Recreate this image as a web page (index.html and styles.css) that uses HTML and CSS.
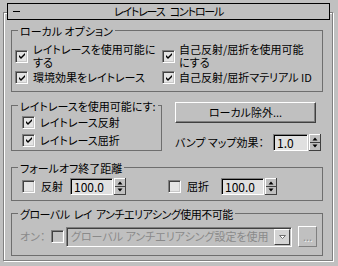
FILE: index.html
```html
<!DOCTYPE html>
<html lang="ja">
<head>
<meta charset="utf-8">
<link rel="stylesheet" href="styles.css">
</head>
<body>
<div class="rollout">
  <div class="title"><span class="minus"></span><span class="title-text">レイトレース コントロール</span></div>

  <div class="group g-local">
    <div class="legend">ローカル オプション</div>
    <div class="opts">
      <div class="chk"><span class="box"><svg width="9" height="9" viewBox="0 0 9 9"><path d="M1 3L3 5L7 1V3L3 7L1 5Z" fill="#000"/></svg></span><span class="txt">レイトレースを使用可能に<br>する</span></div>
      <div class="chk"><span class="box"><svg width="9" height="9" viewBox="0 0 9 9"><path d="M1 3L3 5L7 1V3L3 7L1 5Z" fill="#000"/></svg></span><span class="txt">自己反射/屈折を使用可能<br>にする</span></div>
      <div class="chk"><span class="box"><svg width="9" height="9" viewBox="0 0 9 9"><path d="M1 3L3 5L7 1V3L3 7L1 5Z" fill="#000"/></svg></span><span class="txt">環境効果をレイトレース</span></div>
      <div class="chk"><span class="box"><svg width="9" height="9" viewBox="0 0 9 9"><path d="M1 3L3 5L7 1V3L3 7L1 5Z" fill="#000"/></svg></span><span class="txt">自己反射/屈折マテリアル ID</span></div>
    </div>
  </div>

  <div class="mid">
    <div class="group g-enable">
      <div class="legend">レイトレースを使用可能にす:</div>
      <div class="enable-list">
        <div class="chk"><span class="box"><svg width="9" height="9" viewBox="0 0 9 9"><path d="M1 3L3 5L7 1V3L3 7L1 5Z" fill="#000"/></svg></span><span class="txt">レイトレース反射</span></div>
        <div class="chk"><span class="box"><svg width="9" height="9" viewBox="0 0 9 9"><path d="M1 3L3 5L7 1V3L3 7L1 5Z" fill="#000"/></svg></span><span class="txt">レイトレース屈折</span></div>
      </div>
    </div>
    <div class="side">
      <div class="btn">ローカル除外...</div>
      <div class="bump">
        <span class="txt">バンプ マップ効果：</span>
        <div class="spinner">
          <span class="field f-bump">1.0</span>
          <svg class="arrows" width="12" height="17" viewBox="0 0 12 17"><rect width="12" height="17" fill="#c0c0c0"/><path d="M0 0.5H11M0.5 0V16" stroke="#fff"/><path d="M0 16.5H12M11.5 0V17M1 8.5H11" stroke="#404040"/><path d="M3.5 6.5H8.5L6 3.5Z" fill="#000"/><path d="M3.5 10.5H8.5L6 13.5Z" fill="#000"/></svg>
        </div>
      </div>
    </div>
  </div>

  <div class="group g-falloff">
    <div class="legend">フォールオフ終了距離</div>
    <div class="fo-row">
      <div class="chk fo-refl"><span class="box"></span><span class="txt">反射</span>
        <div class="spinner"><span class="field f-dist">100.0</span><svg class="arrows" width="12" height="17" viewBox="0 0 12 17"><rect width="12" height="17" fill="#c0c0c0"/><path d="M0 0.5H11M0.5 0V16" stroke="#fff"/><path d="M0 16.5H12M11.5 0V17M1 8.5H11" stroke="#404040"/><path d="M3.5 6.5H8.5L6 3.5Z" fill="#000"/><path d="M3.5 10.5H8.5L6 13.5Z" fill="#000"/></svg></div>
      </div>
      <div class="chk fo-refr"><span class="box"></span><span class="txt">屈折</span>
        <div class="spinner"><span class="field f-dist">100.0</span><svg class="arrows" width="12" height="17" viewBox="0 0 12 17"><rect width="12" height="17" fill="#c0c0c0"/><path d="M0 0.5H11M0.5 0V16" stroke="#fff"/><path d="M0 16.5H12M11.5 0V17M1 8.5H11" stroke="#404040"/><path d="M3.5 6.5H8.5L6 3.5Z" fill="#000"/><path d="M3.5 10.5H8.5L6 13.5Z" fill="#000"/></svg></div>
      </div>
    </div>
  </div>

  <div class="group g-aa">
    <div class="legend legend-aa">グローバル レイ アンチエリアシング使用不可能</div>
    <div class="aa-row">
      <span class="txt on">オン：</span>
      <span class="box disabled"></span>
      <div class="combo">
        <span class="combo-text">グローバル アンチエリアシング設定を使用</span>
        <span class="combo-btn"><svg width="9" height="6" viewBox="0 0 9 6"><path d="M1.5 1.5H7.5L4.5 4.5Z" fill="#fff" stroke="#707070"/></svg></span>
      </div>
      <span class="dots">...</span>
    </div>
  </div>
</div>
</body>
</html>
```
FILE: styles.css
```css
* { box-sizing: border-box; }
html, body { margin: 0; padding: 0; }
body {
  width: 338px;
  height: 266px;
  overflow: hidden;
  background: #c0c0c0;
  color: #000;
  font-family: "Noto Sans CJK JP", "Noto Sans", sans-serif;
  font-size: 11px;
  line-height: 13px;
  font-feature-settings: "palt";
}

.rollout {
  margin: 12px 5px 0 3px;
  border: 1px solid #808080;
  box-shadow: 1px 1px 0 #fff, inset 1px 1px 0 #fff;
  padding: 0 0 4px 0;
}

.title {
  margin: -10px 2px 0 3px;
  height: 17px;
  border: 1px solid #000;
  background: #c0c0c0;
  display: grid;
  grid-template-columns: 1fr auto 1fr;
  align-items: center;
}
.minus {
  justify-self: start;
  width: 7px;
  height: 1px;
  margin: 0 0 1px 5px;
  background: #000;
}
.title-text { white-space: nowrap; letter-spacing: -1.2px; word-spacing: 4px; }

.group {
  border: 1px solid #6e6e6e;
  margin: 10px 9px 0 7px;
}
.legend {
  margin: -7px 0 0 6px;
  padding: 0 2px;
  width: max-content;
  line-height: 14px;
  background: #c0c0c0;
  white-space: nowrap;
}
.legend-aa { letter-spacing: -0.5px; word-spacing: 2px; }

.chk {
  display: flex;
  align-items: center;
  gap: 5px;
  white-space: nowrap;
}
.box {
  flex: none;
  width: 13px;
  height: 13px;
  display: flex;
  align-items: center;
  justify-content: center;
  background: #e4e4e4;
  border-top: 1px solid #808080;
  border-left: 1px solid #808080;
  border-right: 1px solid #fff;
  border-bottom: 1px solid #fff;
  box-shadow: inset 1px 1px 0 #404040, inset -1px -1px 0 #c8c8c8;
}
.box svg { display: block; margin: 1px 0 0 1px; }
.box.disabled { background: #c0c0c0; }

.opts {
  display: grid;
  grid-template-columns: 147px 1fr;
  row-gap: 2px;
  padding: 5px 0 7px 3px;
}
.opts .chk:nth-child(even) { gap: 4px; }

.mid {
  display: flex;
  margin: 10px 9px 0 7px;
}
.g-enable {
  margin: 3px 0 0 0;
  width: 151px;
}
.enable-list {
  display: grid;
  grid-auto-rows: 14px;
  row-gap: 4px;
  padding: 2px 0 3px 10px;
}
.side {
  flex: 1;
  margin-left: 13px;
  display: flex;
  flex-direction: column;
}
.btn {
  width: 141px;
  height: 21px;
  display: flex;
  align-items: center;
  justify-content: center;
  border-top: 1px solid #fff;
  border-left: 1px solid #fff;
  border-right: 1px solid #404040;
  border-bottom: 1px solid #404040;
  box-shadow: inset -1px -1px 0 #808080;
}
.bump {
  margin-top: 11px;
  display: flex;
  align-items: center;
  white-space: nowrap;
}
.bump .spinner { margin: 0 2px 0 auto; }

.spinner {
  display: flex;
  align-items: center;
  gap: 1px;
}
.arrows { display: block; flex: none; }
.field {
  height: 17px;
  padding-left: 3px;
  display: flex;
  align-items: center;
  background: #e0e0e0;
  border-top: 1px solid #808080;
  border-left: 1px solid #808080;
  border-right: 1px solid #fff;
  border-bottom: 1px solid #fff;
  box-shadow: inset 1px 1px 0 #000;
  font-size: 12px;
}
.f-bump { width: 35px; }
.f-dist { width: 43px; }

.g-falloff { margin-top: 16px; }
.fo-row {
  display: grid;
  grid-template-columns: 146px 1fr;
  padding: 3px 0 5px 10px;
}
.fo-row .chk { gap: 6px; }
.fo-refl .txt { width: 23px; }
.fo-refr .txt { width: 28px; }

.g-aa { margin-top: 12px; }
.aa-row {
  display: flex;
  align-items: center;
  height: 21px;
  margin: 5px 0 8px 8px;
  color: #8a8a8a;
}
.on { width: 31px; white-space: nowrap; }
.aa-row .box { margin-right: 2px; }
.combo {
  width: 226px;
  height: 20px;
  display: flex;
  align-items: center;
  justify-content: space-between;
  padding: 0 1px 0 4px;
  border-top: 1px solid #808080;
  border-left: 1px solid #808080;
  border-right: 1px solid #fff;
  border-bottom: 1px solid #fff;
  box-shadow: inset 1px 1px 0 #404040;
}
.combo-text {
  white-space: nowrap;
}
.combo-btn {
  flex: none;
  width: 16px;
  height: 16px;
  display: flex;
  align-items: center;
  justify-content: center;
  background: #d4d4d4;
  border-top: 1px solid #fff;
  border-left: 1px solid #fff;
  border-right: 1px solid #404040;
  border-bottom: 1px solid #404040;
}
.dots {
  width: 19px;
  height: 21px;
  margin-left: 6px;
  display: flex;
  align-items: center;
  justify-content: center;
  color: #909090;
  text-shadow: 1px 1px 0 #eee;
  border-top: 1px solid #fff;
  border-left: 1px solid #fff;
  border-right: 1px solid #808080;
  border-bottom: 1px solid #808080;
}
```
